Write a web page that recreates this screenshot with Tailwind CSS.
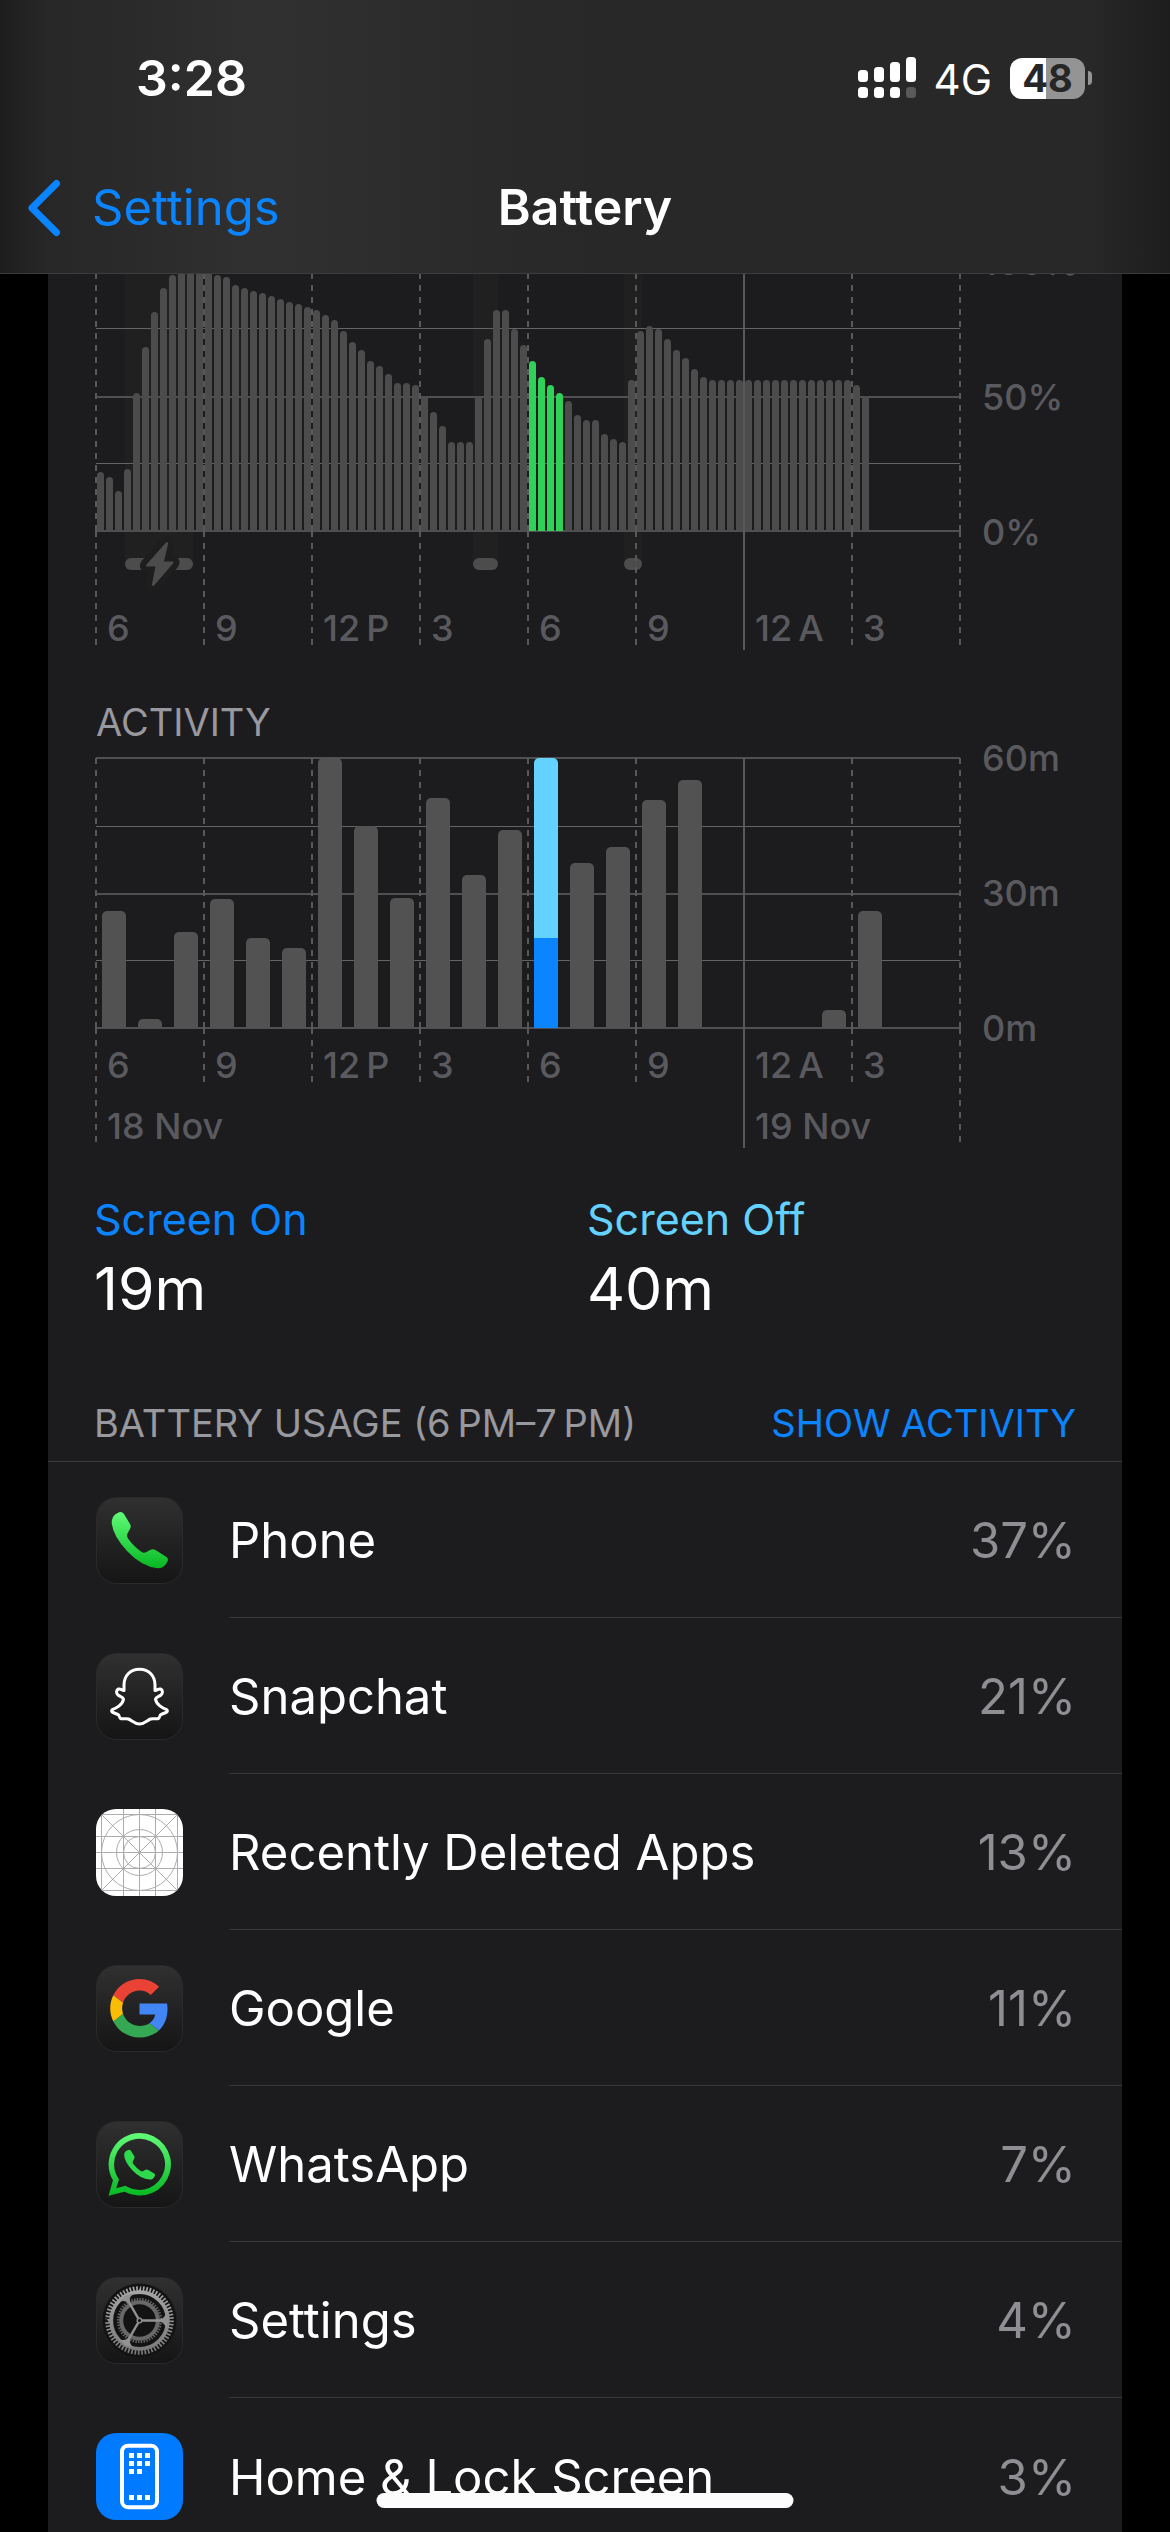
<!DOCTYPE html>
<html lang="en">
<head>
  <meta charset="UTF-8" />
  <title>Battery</title>
  <meta name="viewport" content="width=device-width, initial-scale=1.0" />
  <script src="https://cdn.jsdelivr.net/npm/@tailwindcss/browser@4"></script>
</head>
<body class="relative flex h-screen flex-col overflow-hidden bg-black font-['Inter',sans-serif] text-white">

  <!-- shared icon paints and shapes -->
  <svg class="absolute size-0" aria-hidden="true">
    <defs>
      <linearGradient id="tile" x1="0" y1="0" x2="0" y2="1"><stop offset="0" stop-color="#303030" /><stop offset="1" stop-color="#151515" /></linearGradient>
      <linearGradient id="green" x1="0" y1="0" x2="0" y2="1"><stop offset="0" stop-color="#62fb78" /><stop offset="1" stop-color="#06b822" /></linearGradient>
      <linearGradient id="steel" gradientUnits="userSpaceOnUse" x1="0" y1="9" x2="0" y2="78"><stop offset="0" stop-color="#a9a9a9" /><stop offset="1" stop-color="#777" /></linearGradient>
      <path id="handset" d="M19 17.500 23 15.300Q26 14.300 28 17L34 27Q35.500 29.500 34 32L31.500 36.500Q30.500 39 32 41.500Q38 50 46.500 55.500Q48.500 56.300 50.500 55L54.500 52.700Q57 51.500 59.500 53L70.500 60Q72.500 61.500 71.700 64Q68.500 71.500 62 71.300Q46 70 31 54Q15.500 37 15.700 24Q16 20 19 17.500Z" />
    </defs>
  </svg>

  <header class="flex h-[274px] shrink-0 flex-col border-b border-[#3c3c3e] bg-[linear-gradient(to_right,#1d1d1d,#272727_4%,#303030_22%,#282828_50%,#282828_93%,#1d1d1d)]">
    <!-- status bar -->
    <div class="flex h-[156px] items-center justify-between pr-[78px] pl-[136px]">
      <span class="text-[50px] font-semibold">3:28</span>
      <div class="flex items-center">
        <svg class="h-[42px] w-[60px]" viewBox="0 0 60 42" fill="#fff" role="img" aria-label="Signal strength">
          <rect x="1" y="13" width="10" height="12" rx="3.5" />
          <rect x="17" y="10" width="10" height="15" rx="3.5" />
          <rect x="33" y="5" width="10" height="20" rx="3.5" />
          <rect x="49" y="0" width="10" height="25" rx="3.5" />
          <rect x="1" y="30" width="10" height="11" rx="3.5" />
          <rect x="17" y="30" width="10" height="11" rx="3.5" />
          <rect x="33" y="30" width="10" height="11" rx="3.5" />
          <rect x="49" y="30" width="10" height="11" rx="3.5" fill="#5a5a5a" />
        </svg>
        <span class="ml-[17px] pt-[2px] text-[42px]">4G</span>
        <div class="ml-[18px] flex h-[41px] w-[75px] items-center justify-center rounded-[12px] bg-linear-to-r from-white from-48% to-[#949494] to-48% text-[38px] font-bold text-[#262626]">48</div>
        <div class="ml-[3px] h-[14px] w-[4px] rounded-r-full bg-[#949494]"></div>
      </div>
    </div>
    <!-- navigation bar -->
    <nav class="grid h-[103px] grid-cols-3 items-center px-[26px]">
      <a href="#" class="flex items-center gap-8 text-[49px] text-[#0a84ff]">
        <svg class="h-[58px] w-[34px]" viewBox="0 0 34 58" fill="none" stroke="currentColor" stroke-width="7" stroke-linecap="round" stroke-linejoin="round"><path d="M30.500 4.500 6 29l24.500 24.500" /></svg>
        Settings
      </a>
      <h1 class="text-center text-[50px] font-semibold">Battery</h1>
    </nav>
  </header>

  <main class="mx-12 min-h-0 flex-1 overflow-hidden bg-[#1c1c1e]">

    <!-- battery level -->
    <section class="-mt-[13px] flex px-12" aria-label="Battery level">
      <div class="grid flex-1 grid-cols-1">
        <div class="col-start-1 row-start-1 h-[330px]">
          <svg class="h-[330px] w-full" viewBox="0 0 864 330" preserveAspectRatio="none">
            <g fill="#202020">
              <rect x="29" y="0" width="68" height="303" />
              <rect x="377" y="0" width="25" height="303" />
              <rect x="528" y="0" width="18" height="303" />
            </g>
            <g fill="#4c4c4c">
              <rect x="29" y="297" width="68" height="12" rx="6" />
              <rect x="377" y="297" width="25" height="12" rx="6" />
              <rect x="528" y="297" width="18" height="12" rx="6" />
            </g>
            <path d="M70 281.500 50.500 303.500q-1.500 2 .8 2h8.200L56 323q-.4 3 2 1.500L77 302.500q1.300-2-.8-2H68L72 283q.3-3-2-1.500Z" fill="#4c4c4c" stroke="#1e1e1f" stroke-width="12" stroke-linejoin="round" paint-order="stroke" />
          </svg>
        </div>
        <div class="col-start-1 row-start-1 grid h-[271px] grid-rows-4 border-b-2 border-[#505052]">
          <div></div>
          <div class="border-t border-[#646466]"></div>
          <div class="border-t-2 border-[#505052]"></div>
          <div class="border-t border-[#646466]"></div>
        </div>
        <div id="level-bars" class="col-start-1 row-start-1 grid h-[270px] grid-cols-96 items-end"></div>
        <div id="level-hours" class="col-start-1 row-start-1 grid h-[389px] grid-cols-8"></div>
      </div>
      <div class="-mt-[17px] flex h-[306px] w-[114px] flex-col justify-between pl-[22px] text-[36px] leading-[36px] font-medium text-[#5a5a5e]">
        <span>100%</span><span>50%</span><span>0%</span>
      </div>
    </section>

    <!-- activity -->
    <section class="px-12">
      <h2 class="mt-12 text-[38px] leading-[48px] text-[#98989f]">ACTIVITY</h2>
      <div class="mt-3 flex">
        <div class="grid flex-1 grid-cols-1">
          <div class="col-start-1 row-start-1 -mt-px grid h-[272px] grid-rows-4 border-t-2 border-b-2 border-[#505052]">
            <div></div>
            <div class="border-t border-[#646466]"></div>
            <div class="border-t-2 border-[#505052]"></div>
            <div class="border-t border-[#646466]"></div>
          </div>
          <div id="activity-bars" class="col-start-1 row-start-1 grid h-[270px] grid-cols-24 items-end"></div>
          <div id="activity-hours" class="col-start-1 row-start-1 grid h-[390px] grid-cols-8"></div>
        </div>
        <div class="-mt-[18px] flex h-[306px] w-[114px] flex-col justify-between pl-[22px] text-[36px] leading-[36px] font-medium text-[#5a5a5e]">
          <span>60m</span><span>30m</span><span>0m</span>
        </div>
      </div>
    </section>

    <dl class="mt-[45px] grid grid-cols-2 gap-x-1 px-[46px]">
      <div>
        <dt class="text-[43px] leading-[52px] text-[#0a84ff]">Screen On</dt>
        <dd class="mt-[10px] text-[59px] leading-[68px]">19m</dd>
      </div>
      <div>
        <dt class="text-[43px] leading-[52px] text-[#64d2ff]">Screen Off</dt>
        <dd class="mt-[10px] text-[59px] leading-[68px]">40m</dd>
      </div>
    </dl>

    <!-- usage by app -->
    <section>
      <div class="mt-[76px] flex justify-between border-b border-[#3c3c3e] px-[46px] pb-[14px] text-[38px] leading-[48px]">
        <h2 class="text-[#98989f]">BATTERY USAGE (6&#8201;PM–7&#8201;PM)</h2>
        <button type="button" class="text-[#0a84ff]">SHOW ACTIVITY</button>
      </div>
      <ul class="text-[49px]">
        <li class="flex h-[156px] items-center gap-[46px] pl-12">
          <svg class="size-[87px] shrink-0" viewBox="0 0 87 87">
            <rect x=".5" y=".5" width="86" height="86" rx="20" fill="url(#tile)" stroke="#2a2a2a" />
            <use href="#handset" fill="url(#green)" />
          </svg>
          <div class="flex h-full flex-1 items-center justify-between border-b border-[#38383a] pt-[3px] pr-[46px]"><span>Phone</span><span class="text-[#8e8e93]">37%</span></div>
        </li>
        <li class="flex h-[156px] items-center gap-[46px] pl-12">
          <svg class="size-[87px] shrink-0" viewBox="0 0 87 87">
            <rect x=".5" y=".5" width="86" height="86" rx="20" fill="url(#tile)" stroke="#2a2a2a" />
            <path d="M43.500 16.300C34 16.300 28 23 28 32V37.500C25.500 37 24.500 35.500 22.500 36C20 37 20 40.500 22 42C24 43.500 27 44 27.500 46C27 51.500 20 55.500 16.500 56.500C15 57.500 15.500 59 17 59.500L22 61.500C23.500 62 23 64.500 24.500 65.500C27 66.500 29.500 65 32.500 66C36 67.500 38.500 71 43.500 71C48.500 71 51 67.500 54.500 66C57.500 65 60 66.500 62.500 65.500C64 64.500 63.500 62 65 61.500L70 59.500C71.500 59 72 57.500 70.500 56.500C67 55.500 60 51.500 59.500 46C60 44 63 43.500 65 42C67 40.500 67 37 64.500 36C62.500 35.500 61.500 37 59 37.500V32C59 23 53 16.300 43.500 16.300Z" fill="none" stroke="#fff" stroke-width="3" stroke-linejoin="round" />
          </svg>
          <div class="flex h-full flex-1 items-center justify-between border-b border-[#38383a] pt-[3px] pr-[46px]"><span>Snapchat</span><span class="text-[#8e8e93]">21%</span></div>
        </li>
        <li class="flex h-[156px] items-center gap-[46px] pl-12">
          <svg class="size-[87px] shrink-0 rounded-[20px]" viewBox="0 0 87 87">
            <rect width="87" height="87" fill="#fff" />
            <g fill="none" stroke="#adadad">
              <path d="M5.500 0V87M27.500 0V87M43.500 0V87M59.500 0V87M81.500 0V87M0 5.500H87M0 27.500H87M0 43.500H87M0 59.500H87M0 81.500H87M0 0 87 87M87 0 0 87" />
              <circle cx="43.500" cy="43.500" r="38" />
              <circle cx="43.500" cy="43.500" r="23" />
              <circle cx="43.500" cy="43.500" r="16" />
            </g>
          </svg>
          <div class="flex h-full flex-1 items-center justify-between border-b border-[#38383a] pt-[3px] pr-[46px]"><span>Recently Deleted Apps</span><span class="text-[#8e8e93]">13%</span></div>
        </li>
        <li class="flex h-[156px] items-center gap-[46px] pl-12">
          <svg class="size-[87px] shrink-0" viewBox="0 0 87 87">
            <rect x=".5" y=".5" width="86" height="86" rx="20" fill="url(#tile)" stroke="#2a2a2a" />
            <g transform="translate(14.200 14) scale(1.220)">
              <path fill="#EA4335" d="M24 9.500c3.540 0 6.710 1.220 9.210 3.600l6.850-6.850C35.900 2.380 30.470 0 24 0 14.620 0 6.510 5.380 2.560 13.220l7.980 6.190C12.430 13.720 17.740 9.500 24 9.500z" />
              <path fill="#4285F4" d="M46.980 24.550c0-1.570-.15-3.090-.38-4.550H24v9.020h12.940c-.58 2.960-2.260 5.480-4.780 7.180l7.730 6c4.510-4.180 7.090-10.360 7.090-17.650z" />
              <path fill="#FBBC05" d="M10.530 28.590c-.48-1.450-.76-2.990-.76-4.590s.27-3.140.76-4.590l-7.980-6.190C.92 16.460 0 20.120 0 24c0 3.880.92 7.540 2.560 10.780l7.970-6.190z" />
              <path fill="#34A853" d="M24 48c6.480 0 11.930-2.130 15.890-5.810l-7.730-6c-2.150 1.450-4.920 2.300-8.160 2.300-6.260 0-11.570-4.220-13.470-9.910l-7.980 6.190C6.510 42.620 14.620 48 24 48z" />
            </g>
          </svg>
          <div class="flex h-full flex-1 items-center justify-between border-b border-[#38383a] pt-[3px] pr-[46px]"><span>Google</span><span class="text-[#8e8e93]">11%</span></div>
        </li>
        <li class="flex h-[156px] items-center gap-[46px] pl-12">
          <svg class="size-[87px] shrink-0" viewBox="0 0 87 87">
            <rect x=".5" y=".5" width="86" height="86" rx="20" fill="url(#tile)" stroke="#2a2a2a" />
            <path fill="url(#green)" fill-rule="evenodd" d="M43.700 12a31.300 31.300 0 1 1-15.200 58.700L12.500 74.800 17 59.300A31.300 31.300 0 0 1 43.700 12ZM43.700 17.700a25.600 25.600 0 0 0-21.500 39.500l.8 1.300L20.200 67.200 29.500 64.800l1.200.7A25.600 25.600 0 1 0 43.700 17.700Z" />
            <use href="#handset" transform="translate(19.500 20.800) scale(.550 .530)" fill="#2fd94c" />
          </svg>
          <div class="flex h-full flex-1 items-center justify-between border-b border-[#38383a] pt-[3px] pr-[46px]"><span>WhatsApp</span><span class="text-[#8e8e93]">7%</span></div>
        </li>
        <li class="flex h-[156px] items-center gap-[46px] pl-12">
          <svg class="size-[87px] shrink-0" viewBox="0 0 87 87">
            <rect x=".5" y=".5" width="86" height="86" rx="20" fill="url(#tile)" stroke="#2a2a2a" />
            <circle cx="43.500" cy="43.500" r="37" fill="#131313" />
            <g fill="none" stroke="#686868">
              <circle cx="43.500" cy="43.500" r="21.300" stroke-width="2.600" pathLength="96" stroke-dasharray="1 1" />
              <circle cx="43.500" cy="43.500" r="18.300" stroke-width="4" />
            </g>
            <g fill="none" stroke="url(#steel)">
              <circle cx="43.500" cy="43.500" r="31.800" stroke-width="5" pathLength="120" stroke-dasharray="1 1" />
              <circle cx="43.500" cy="43.500" r="28.300" stroke-width="3.800" />
            </g>
            <g fill="#929292">
              <path id="spoke" d="M46 42.300H64Q69 41.500 70 35L72 43.500 70 52Q69 45.500 64 44.700H46Z" />
              <use href="#spoke" transform="rotate(120 43.500 43.500)" />
              <use href="#spoke" transform="rotate(240 43.500 43.500)" />
            </g>
            <circle cx="43.500" cy="43.500" r="2.300" fill="#111" stroke="#8c8c8c" stroke-width="1.500" />
          </svg>
          <div class="flex h-full flex-1 items-center justify-between border-b border-[#38383a] pt-[3px] pr-[46px]"><span>Settings</span><span class="text-[#8e8e93]">4%</span></div>
        </li>
        <li class="flex h-[156px] items-center gap-[46px] pl-12">
          <svg class="size-[87px] shrink-0" viewBox="0 0 87 87">
            <rect width="87" height="87" rx="20" fill="#007aff" />
            <rect x="26" y="12.700" width="35" height="61.500" rx="6" fill="none" stroke="#fff" stroke-width="4" />
            <path d="M33 22.500H55M33 30.500H55M33 38.500H47M33 64.500H55" fill="none" stroke="#fff" stroke-width="5" stroke-dasharray="5 3" />
          </svg>
          <div class="flex h-full flex-1 items-center justify-between pt-[3px] pr-[46px]"><span>Home &amp; Lock Screen</span><span class="text-[#8e8e93]">3%</span></div>
        </li>
      </ul>
    </section>
  </main>

  <!-- home indicator -->
  <div class="absolute bottom-6 left-1/2 h-[15px] w-[417px] -translate-x-1/2 rounded-full bg-[#fcfcfc]"></div>

  <script>
    // battery level in percent, one value per 15 minutes
    const levels = [
      22, 20, 15, 23, 51, 68, 81, 90, 95, 98, 100, 100, 98, 95, 94, 91, 90, 89, 88, 87, 86, 85, 84, 83,
      82, 80, 78, 74, 70, 67, 63, 61, 58, 55, 55, 54, 50, 44, 39, 33, 33, 33, 50, 71, 82, 82, 75, 69,
      63, 57, 54, 51, 48, 43, 41, 41, 36, 34, 33, 56, 74, 76, 75, 71, 67, 64, 60, 57, 56, 56, 56, 56,
      56, 56, 56, 56, 56, 56, 56, 56, 56, 56, 56, 56, 54, 50
    ];
    // minutes of use, one value per hour
    const minutes = [26, 2, 21.3, 28.7, 20, 17.8, 60, 45, 28.9, 51.1, 34, 44, 60, 36.7, 40.2, 50.7, 55.1, 0, 0, 0, 4, 26];
    const selectedHour = 12;
    const screenOnMinutes = 20;
    const hours = ["6", "9", "12\u2009P", "3", "6", "9", "12\u2009A", "3"];
    const dates = { 0: "18 Nov", 6: "19 Nov" };

    document.getElementById("level-bars").innerHTML = levels.map((level, i) => {
      const selected = Math.floor(i / 4) === selectedHour;
      return `<div class="mx-px rounded-t-full ${selected ? "bg-[#30d158]" : "bg-[#4c4c4c]"}" style="height:${level * 2.7}px"></div>`;
    }).join("");

    document.getElementById("activity-bars").innerHTML = minutes.map((m, i) => {
      if (i === selectedHour) {
        return `<div class="mx-[6px] flex flex-col justify-end overflow-hidden rounded-t-[5px] bg-[#64d2ff]" style="height:${m * 4.5}px">
          <div class="bg-[#0a84ff]" style="height:${screenOnMinutes * 4.5}px"></div>
        </div>`;
      }
      return `<div class="mx-[6px] rounded-t-[5px] bg-[#525252]" style="height:${m * 4.5}px"></div>`;
    }).join("");

    // the dash pattern starts again at the baseline
    const dashes = "bg-[repeating-linear-gradient(#58585a_0_6px,transparent_6px_12px)]";
    const dashedLine = (tail) => `<div class="h-[270px] ${dashes}"></div><div class="${tail} ${dashes}"></div>`;

    function drawHours(id, labelPadding, shortTail, longTail, withDates) {
      document.getElementById(id).innerHTML = hours.map((hour, i) => {
        const line = i === 6
          ? `<div class="h-full bg-[#58585a]"></div>`
          : dashedLine(withDates && i === 0 ? longTail : shortTail);
        const date = withDates && dates[i] ? `<div class="mt-[25px]">${dates[i]}</div>` : "";
        const end = i === 7 ? `<div class="-mr-px ml-auto w-[2px] shrink-0">${dashedLine(longTail)}</div>` : "";
        return `<div class="flex">
          <div class="-ml-px w-[2px] shrink-0">${line}</div>
          <div class="${labelPadding} pl-[10px] text-[36px] leading-[36px] font-medium whitespace-nowrap text-[#5a5a5e]">${hour}${date}</div>
          ${end}
        </div>`;
      }).join("");
    }
    drawHours("level-hours", "pt-[349px]", "h-[114px]", "h-[114px]", false);
    drawHours("activity-hours", "pt-[289px]", "h-[54px]", "h-[114px]", true);
  </script>
</body>
</html>
